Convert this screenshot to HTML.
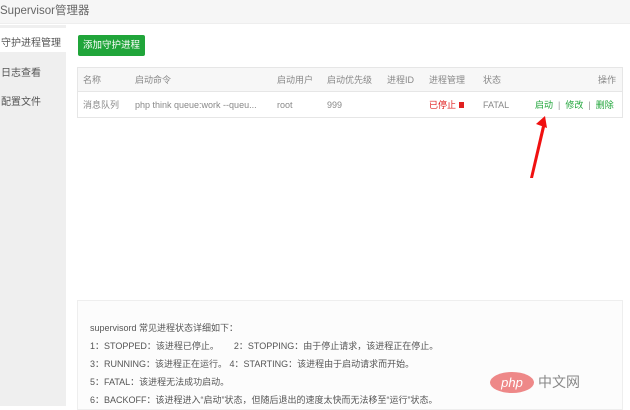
<!DOCTYPE html><html><head><style>
*{margin:0;padding:0;box-sizing:border-box}
body{width:630px;height:406px;overflow:hidden;background:#fff;font-family:"Liberation Sans","Noto Sans CJK SC",sans-serif;color:#666;position:relative}
.a{position:absolute;white-space:nowrap}
.r span{position:absolute;top:0;line-height:12px}
</style></head><body>
<div class="a" style="left:0;top:0;width:630px;height:24px;background:#f6f6f6;border-bottom:1px solid #eee"></div>
<div class="a" style="left:0;top:1px;font-size:11.5px;color:#666;line-height:20px">Supervisor管理器</div>
<div class="a" style="left:0;top:25px;width:66px;height:381px;background:#efefef"></div>
<div class="a" style="left:0;top:28px;width:66px;height:24px;background:#fff"></div>
<div class="a" style="left:1px;top:34px;font-size:10px;color:#555">守护进程管理</div>
<div class="a" style="left:1px;top:64px;font-size:10px;color:#555">日志查看</div>
<div class="a" style="left:1px;top:93px;font-size:10px;color:#555">配置文件</div>
<div class="a" style="left:78px;top:35px;width:67px;height:21px;background:#20a53a;border-radius:2px;color:#fff;font-size:9.5px;line-height:21px;text-align:center">添加守护进程</div>
<div class="a" style="left:77px;top:67px;width:546px;height:51px;border:1px solid #e6e6e6"></div>
<div class="a" style="left:78px;top:68px;width:544px;height:24px;background:#f7f7f7;border-bottom:1px solid #e6e6e6"></div>
<div class="a r" style="top:74px;left:0;font-size:9px;color:#888;width:630px;height:12px">
<span style="left:83px">名称</span><span style="left:135px">启动命令</span><span style="left:277px">启动用户</span><span style="left:327px">启动优先级</span><span style="left:387px">进程ID</span><span style="left:429px">进程管理</span><span style="left:483px">状态</span><span style="left:598px">操作</span></div>
<div class="a r" style="top:99px;left:0;font-size:9px;color:#888;width:630px;height:12px">
<span style="left:83px">消息队列</span><span style="left:135px">php think queue:work --queu...</span><span style="left:277px">root</span><span style="left:327px">999</span><span style="left:429px;color:#e02020">已停止 <b style="display:inline-block;width:5px;height:6px;background:#e02020"></b></span><span style="left:483px">FATAL</span><span style="left:535px;color:#20a53a">启动 <span style="position:static;color:#999">&nbsp;|&nbsp;</span> 修改 <span style="position:static;color:#999">&nbsp;|&nbsp;</span> 删除</span></div>
<svg class="a" style="left:0;top:0" width="630" height="406"><path d="M530 178 L542 126 L545 127 L533 178Z" fill="#f01010"/><path d="M536 124 L545 116 L547 128 Z" fill="#f01010"/></svg>
<div class="a" style="left:77px;top:300px;width:546px;height:110px;border:1px solid #eee;background:#fcfcfc"></div>
<div class="a" style="left:90px;top:319px;font-size:9px;color:#555;line-height:18px">supervisord 常见进程状态详细如下：<br>1：STOPPED：该进程已停止。&nbsp;&nbsp;&nbsp;&nbsp;&nbsp; 2：STOPPING：由于停止请求，该进程正在停止。<br>3：RUNNING：该进程正在运行。 4：STARTING：该进程由于启动请求而开始。<br>5：FATAL：该进程无法成功启动。<br>6：BACKOFF：该进程进入“启动”状态，但随后退出的速度太快而无法移至“运行”状态。</div>
<div class="a" style="left:490px;top:372px;width:44px;height:21px;border-radius:50%;background:#e88;color:#fff;font-size:13px;font-style:italic;text-align:center;line-height:21px">php</div>
<div class="a" style="left:538px;top:372px;font-size:14px;color:#888">中文网</div>
</body></html>
